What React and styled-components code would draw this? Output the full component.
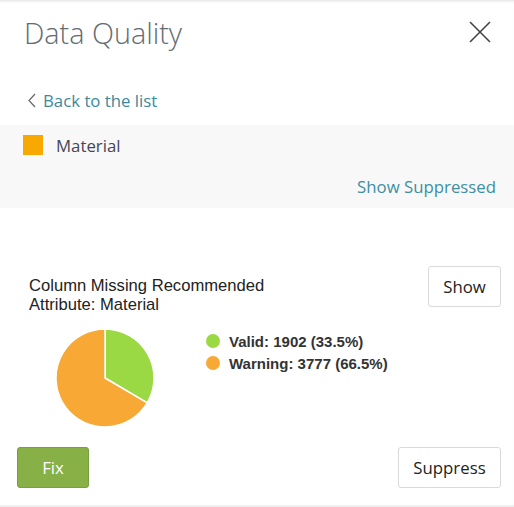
import React from "react";
import styled, { createGlobalStyle } from "styled-components";

const GlobalStyle = createGlobalStyle`
  html, body {
    margin: 0;
    padding: 0;
    background: #fff;
  }
  body {
    font-family: "Open Sans", "Liberation Sans", sans-serif;
  }
`;

const Panel = styled.div`
  width: 514px;
  height: 507px;
  box-sizing: border-box;
  display: flex;
  flex-direction: column;
  background: #fff;
  box-shadow: inset 0 3px 3px -2px rgba(0, 0, 0, 0.12);
  border-bottom: 2px solid #eeeeee;
  overflow: hidden;
`;

const Header = styled.div`
  display: flex;
  justify-content: space-between;
  align-items: center;
  padding: 15px 22px 0 24px;
  height: 36px;
`;

const Title = styled.h1`
  margin: 0;
  font-size: 28.8px;
  font-weight: 300;
  line-height: 36px;
  color: #646b72;
`;

const CloseButton = styled.button`
  width: 24px;
  height: 24px;
  padding: 0;
  margin-top: -3px;
  border: 0;
  background: none;
  display: flex;
  align-items: center;
  justify-content: center;
  cursor: pointer;
`;

const BackLink = styled.a`
  display: flex;
  align-items: center;
  gap: 7px;
  margin: 37px 0 0 28px;
  height: 24px;
  font-size: 16.8px;
  color: #3a8a9b;
  text-decoration: none;
  cursor: pointer;
`;

const FilterBar = styled.div`
  margin-top: 13px;
  background: #f8f8f8;
  padding: 10px 18px 9px 23px;
  display: flex;
  flex-direction: column;
  gap: 20px;
`;

const FilterRow = styled.div`
  display: flex;
  align-items: center;
  gap: 13px;
  height: 20px;
  font-size: 16.8px;
  color: #454556;
`;

const Swatch = styled.span`
  width: 20px;
  height: 20px;
  background: ${(p) => p.color};
`;

const LinkRow = styled.div`
  display: flex;
  justify-content: flex-end;
  line-height: 24px;
`;

const TextLink = styled.a`
  font-size: 16.8px;
  color: #3d8fa3;
  cursor: pointer;
`;

const Card = styled.div`
  margin-top: 58px;
  padding: 0 13px 0 17px;
  display: flex;
  flex-direction: column;
`;

const CardTop = styled.div`
  display: flex;
  justify-content: space-between;
  align-items: flex-start;
`;

const RuleTitle = styled.div`
  margin: 10px 0 0 12px;
  font-family: "Liberation Sans", Arial, sans-serif;
  font-size: 16.6px;
  line-height: 19px;
  color: #222;
`;

const Button = styled.button`
  height: ${(p) => p.h || 41}px;
  width: ${(p) => p.w}px;
  box-sizing: border-box;
  font-family: "Open Sans", sans-serif;
  font-size: 16.8px;
  border-radius: 3px;
  border: 1px solid ${(p) => (p.primary ? "#75a03c" : "#d9d9d9")};
  background: ${(p) => (p.primary ? "#87b146" : "#fff")};
  color: ${(p) => (p.primary ? "#fff" : "#222")};
  cursor: pointer;
  padding: 0;
`;

const ChartRow = styled.div`
  display: flex;
  align-items: flex-start;
  margin-top: 14px;
  padding-left: 38px;
`;

const Legend = styled.ul`
  list-style: none;
  margin: 3px 0 0 51px;
  padding: 0;
  display: flex;
  flex-direction: column;
  gap: 2px;
`;

const LegendItem = styled.li`
  display: flex;
  align-items: center;
  gap: 9px;
  height: 20px;
  font-family: "Liberation Sans", Arial, sans-serif;
  font-weight: bold;
  font-size: 15px;
  color: #333;
`;

const Dot = styled.span`
  width: 14px;
  height: 14px;
  border-radius: 50%;
  background: ${(p) => p.color};
`;

const Actions = styled.div`
  display: flex;
  justify-content: space-between;
  margin-top: 19px;
`;

const GREEN = "#9ad944";
const ORANGE = "#f8a935";

const slices = [
  { label: "Valid", value: 1902, color: GREEN },
  { label: "Warning", value: 3777, color: ORANGE },
];

function Pie({ data, r = 49 }) {
  const total = data.reduce((s, d) => s + d.value, 0);
  const c = r + 1;
  let angle = -Math.PI / 2;
  return (
    <svg width={c * 2} height={c * 2} viewBox={`0 0 ${c * 2} ${c * 2}`}>
      {data.map((d) => {
        const a = (d.value / total) * Math.PI * 2;
        const x1 = c + r * Math.cos(angle);
        const y1 = c + r * Math.sin(angle);
        const x2 = c + r * Math.cos(angle + a);
        const y2 = c + r * Math.sin(angle + a);
        const large = a > Math.PI ? 1 : 0;
        const path = `M${c},${c} L${x1},${y1} A${r},${r} 0 ${large} 1 ${x2},${y2} Z`;
        angle += a;
        return <path key={d.label} d={path} fill={d.color} stroke="#fff" strokeWidth="1.5" strokeLinejoin="round" />;
      })}
    </svg>
  );
}

export default function App() {
  const total = slices.reduce((s, d) => s + d.value, 0);
  return (
    <>
      <GlobalStyle />
      <Panel>
        <Header>
          <Title>Data Quality</Title>
          <CloseButton aria-label="Close">
            <svg width="22" height="22" viewBox="0 0 22 22">
              <path d="M1 1 L21 21 M21 1 L1 21" stroke="#444" strokeWidth="1.6" fill="none" />
            </svg>
          </CloseButton>
        </Header>
        <BackLink>
          <svg width="8" height="15" viewBox="0 0 8 15">
            <polyline points="7,1 1,7.5 7,14" fill="none" stroke="#666" strokeWidth="1.2" />
          </svg>
          Back to the list
        </BackLink>
        <FilterBar>
          <FilterRow>
            <Swatch color="#f7a900" />
            Material
          </FilterRow>
          <LinkRow>
            <TextLink>Show Suppressed</TextLink>
          </LinkRow>
        </FilterBar>
        <Card>
          <CardTop>
            <RuleTitle>
              Column Missing Recommended
              <br />
              Attribute: Material
            </RuleTitle>
            <Button w={73} h={41}>Show</Button>
          </CardTop>
          <ChartRow>
            <Pie data={slices} />
            <Legend>
              {slices.map((s) => (
                <LegendItem key={s.label}>
                  <Dot color={s.color} />
                  {s.label}: {s.value} ({((s.value / total) * 100).toFixed(1)}%)
                </LegendItem>
              ))}
            </Legend>
          </ChartRow>
          <Actions>
            <Button primary w={72}>Fix</Button>
            <Button w={103}>Suppress</Button>
          </Actions>
        </Card>
      </Panel>
    </>
  );
}
